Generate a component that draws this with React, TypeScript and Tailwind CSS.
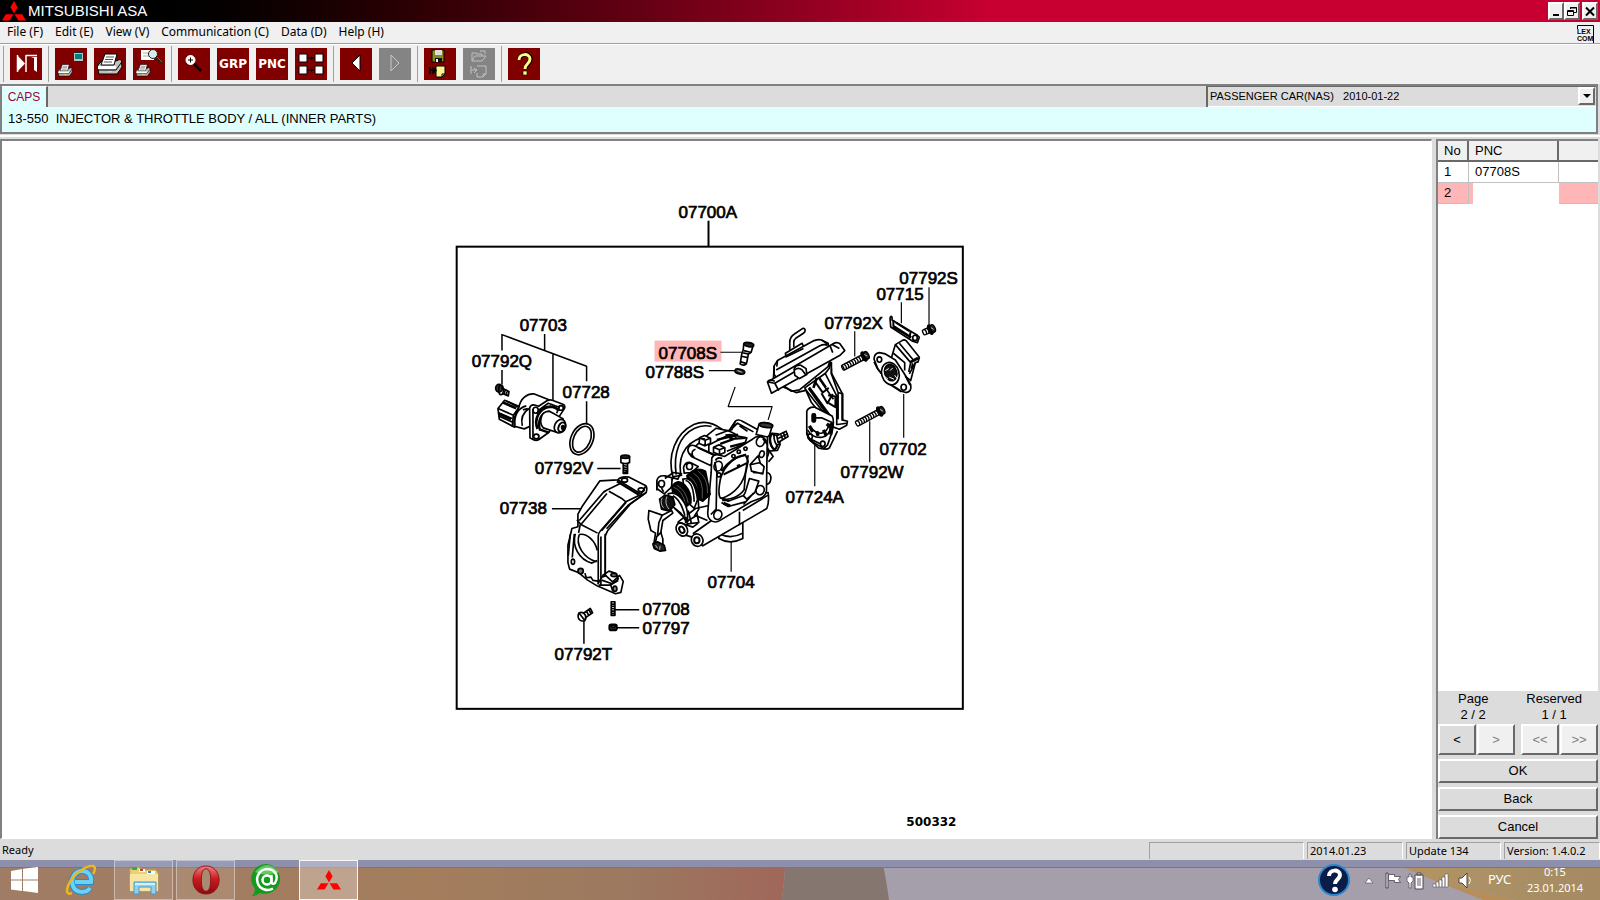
import React from "react";

const raised =
  "border-2 border-t-white border-l-white border-r-[#696969] border-b-[#696969]";
const pixelFont = "font-['Liberation_Sans',Arial,sans-serif]";

const menus = ["File (F)", "Edit (E)", "View (V)", "Communication (C)", "Data (D)", "Help (H)"];

function Diamonds({ className }: { className: string }) {
  return (
    <svg viewBox="0 0 24 20" className={className} fill="#ff0000" aria-hidden="true">
      <path d="M12 0l3.6 6.2L12 12.4 8.4 6.2z" />
      <path d="M11.4 13.2L7.6 19.6H0l3.8-6.4z" />
      <path d="M12.6 13.2l3.8 6.4H24l-3.8-6.4z" />
    </svg>
  );
}

function Printer() {
  return (
    <g strokeLinejoin="round">
      <path d="M4 17l4-4h14l5-2 1 8-5 7H5l-1-4z" fill="#c0c0c0" stroke="#000" />
      <path d="M11 6h12l-3 11H7z" fill="#fff" stroke="#000" />
      <path d="M12 9h8M11 11.500h8M10 14h8" stroke="#555" />
      <path d="M4 18h18v3H4z" fill="#fff" />
      <path d="M4 22h18l5-7" fill="none" stroke="#000" />
      <path d="M14 23h4v1h-4z" fill="#ffee00" />
    </g>
  );
}

type Tool = { label: string; icon: React.ReactNode; disabled?: boolean };

const toolGroups: Tool[][] = [
  [
    {
      label: "Exit",
      icon: (
        <g>
          <path d="M8 8v15l7-7.500z" fill="#fff" />
          <path d="M16 7v17M7.500 7v17" stroke="#fff" strokeWidth="1.500" />
          <path d="M16 7.500h11" stroke="#fff" strokeWidth="1.500" />
          <path d="M21 9h6v15l-3-2V10z" fill="#fff" />
        </g>
      ),
    },
  ],
  [
    {
      label: "Print screen",
      icon: (
        <g>
          <path d="M18.500 4.500h10v9h-10z" fill="#c0c0c0" stroke="#222" />
          <path d="M20 6h7v5h-7z" fill="#008080" />
          <g transform="translate(1 13) scale(.58)">
            <Printer />
          </g>
        </g>
      ),
    },
    { label: "Print", icon: <Printer /> },
    {
      label: "Print preview",
      icon: (
        <g>
          <path d="M8 2h13v10H8z" fill="#fff" />
          <path d="M10 5h7M10 8h7" stroke="#aaa" />
          <circle cx="20" cy="6" r="4.500" fill="#d8ecec" stroke="#222" />
          <path d="M23 9l6 6" stroke="#222" strokeWidth="2.500" />
          <path d="M24 9l5 5" stroke="#a06030" />
          <g transform="translate(1 13) scale(.58)">
            <Printer />
          </g>
        </g>
      ),
    },
  ],
  [
    {
      label: "Zoom",
      icon: (
        <g>
          <circle cx="12.500" cy="12" r="4.500" fill="#fff" stroke="#fff" />
          <path d="M10 12h5M12.500 9.500v5" stroke="#000" />
          <path d="M16 16l7 7" stroke="#000" strokeWidth="2.500" />
        </g>
      ),
    },
    { label: "GRP", icon: null },
    { label: "PNC", icon: null },
    {
      label: "Links",
      icon: (
        <g>
          <path
            d="M4 6h8v8H4zM20 6h8v8h-8zM4 18h8v8H4zM20 18h8v8h-8z"
            fill="#fff"
            stroke="#000"
          />
          <path d="M13 10h4M13 22h4" stroke="#000" />
          <path d="M16 8l3 2-3 2zM16 20l3 2-3 2z" fill="#000" />
        </g>
      ),
    },
  ],
  [
    { label: "Previous", icon: <path d="M20 7v16l-8-8z" fill="#fff" stroke="#000" /> },
    {
      label: "Next",
      icon: <path d="M12 7v16l8-8z" fill="none" stroke="#c8c8c8" />,
      disabled: true,
    },
  ],
  [
    {
      label: "Save list",
      icon: (
        <g>
          <path d="M8 2h12v12H8z" fill="#8a8a20" stroke="#000" />
          <path d="M11 2h7v5h-7z" fill="#ddd" />
          <path d="M11 10h7v4h-7z" fill="#111" />
          <path d="M12 11h2v3h-2z" fill="#eee" />
          <path d="M12 18h9v8l-3 3h-6z" fill="#fff58a" stroke="#000" />
          <path d="M21 26h-3v3" fill="none" stroke="#000" />
          <path d="M6 19v7M6 22h6M9 20l3 2.500-3 2.500z" stroke="#000" strokeWidth="1.500" />
        </g>
      ),
    },
    {
      label: "Open list",
      icon: (
        <g fill="none" stroke="#c0c0c0">
          <path d="M9 13V5h4l1 1h5v2M9 13l3-5h11l-4 5zM17 3h5v3" />
          <path d="M14 18h9v8l-3 3h-6v-4M20 29v-3h3M8 18v8M8 22h6M11 20l3 2-3 3" />
        </g>
      ),
      disabled: true,
    },
  ],
  [
    {
      label: "Help",
      icon: (
        <g fill="none">
          <path
            d="M11.500 12c0-7 11-7 11-1 0 5-5 4.500-5 10"
            stroke="#000"
            strokeWidth="4.500"
          />
          <path
            d="M11 12c0-7 11-7 11-1 0 5-5 4.500-5 10"
            stroke="#ffff80"
            strokeWidth="3"
          />
          <path d="M15 23h4v4h-4z" fill="#ffff80" stroke="#000" strokeWidth=".6" />
        </g>
      ),
    },
  ],
];

function ToolButton({ label, icon, disabled }: Tool) {
  return (
    <button
      aria-label={label}
      disabled={disabled}
      className={`h-8 w-8 shrink-0 ${disabled ? "bg-[#848484]" : "bg-[#800000]"}`}
    >
      {icon ? (
        <svg viewBox="0 0 32 32" className="h-8 w-8">
          {icon}
        </svg>
      ) : (
        <span className="flex justify-center font-['DejaVu_Sans',sans-serif] text-[12px] font-bold text-white">
          {label}
        </span>
      )}
    </button>
  );
}

const labels: [string, number, number][] = [
  ["07700A", 679, 217],
  ["07792S", 900, 283],
  ["07715", 877, 299],
  ["07792X", 825, 328],
  ["07702", 880, 454],
  ["07792W", 841, 478],
  ["07724A", 786, 503],
  ["07703", 520, 330],
  ["07792Q", 472, 366],
  ["07728", 563, 397],
  ["07792V", 535, 474],
  ["07738", 500, 514],
  ["07708", 643, 615],
  ["07797", 643, 634],
  ["07792T", 555, 660],
  ["07708S", 659, 358],
  ["07788S", 646, 377],
  ["07704", 708, 588],
];

function Bolt({ x, y, angle, length }: { x: number; y: number; angle: number; length: number }) {
  const threads = [];
  for (let i = 8; i < length; i += 8) threads.push(`M${-i} -8q5 8 0 16`);
  return (
    <g transform={`translate(${x} ${y}) rotate(${angle})`} strokeWidth="4">
      <rect x={-length} y="-8" width={length} height="16" rx="4" fill="#fff" />
      <path d={threads.join("")} />
      <ellipse cx="0" cy="0" rx="6" ry="15" fill="#000" />
      <ellipse cx="8" cy="0" rx="7" ry="12" fill="#222" />
      <path d="M4 -5l5 8" stroke="#fff" strokeWidth="2" />
    </g>
  );
}

function IdleMotor() {
  return (
    <g transform="translate(450 300) scale(.33333)">
      <path d="M157 150V102L411 197V242M285 100V150M310 162V306M157 208V252M411 302V370M443 504H513" />
      <g strokeWidth="5">
        <ellipse cx="148" cy="263" rx="10" ry="12" fill="#333" />
        <ellipse cx="154" cy="268" rx="7" ry="14" />
        <path d="M160 264l18 9-2 13-18-7M167 267l-4 14M173 270l-4 14" />
        <path d="M145 324l20-25 44 19-2 20-12 42-46-24z" fill="#fff" />
        <path d="M145 324l46 20 18-25M145 336l42 18M147 346l40 18M170 301l38 20M191 344l-3 34" />
        <path d="M160 306l40 17M148 340l36 16" strokeWidth="8" />
        <path d="M208 320c4-26 24-42 46-40l42 17-10 60-62 28-30-8c-3-18 1-36 14-57z" fill="#fff" />
        <path d="M196 376c-4-28 8-54 34-60M218 376c-5-22 2-40 20-52M220 328l14-4" />
        <path
          d="M240 322q4-12 17-8l10 3 26-17q8-4 15-1l32 12q9 5 4 14l-10 15-36 55-30 22q-8 5-18 0l-9-5z"
          fill="#fff"
        />
        <path d="M250 325v90M268 328l28-20 33 12-8 18M262 340c4-14 18-20 34-20" />
        <ellipse cx="258" cy="329" rx="8" ry="9" />
        <ellipse cx="334" cy="322" rx="7" ry="7" />
        <ellipse cx="260" cy="408" rx="8" ry="7" />
        <path d="M264 385c-12-28 4-64 38-67 10 0 22 6 24 12" strokeWidth="8" />
        <path d="M272 390c-10-24 0-54 28-58M268 386l30 10" strokeWidth="7" />
        <path d="M275 350c4-14 14-18 26-17l40 22-18 41-42-14c-8-8-9-20-6-32z" fill="#fff" />
        <ellipse cx="331" cy="377" rx="16" ry="21" transform="rotate(24 331 377)" fill="#fff" />
        <ellipse cx="337" cy="380" rx="10" ry="15" transform="rotate(24 337 380)" strokeWidth="6" />
        <ellipse cx="340" cy="381" rx="4" ry="6" fill="#000" />
        <ellipse cx="397" cy="416" rx="33" ry="49" transform="rotate(24 397 416)" />
        <ellipse cx="397" cy="416" rx="25" ry="41" transform="rotate(24 397 416)" />
        <path d="M514 468h26v18q-13 7-26 0z" fill="#fff" />
        <ellipse cx="527" cy="469" rx="13" ry="5" fill="#222" />
        <path d="M521 489v30h13v-30M521 495l13 3M521 502l13 3M521 509l13 3M521 516h13" />
      </g>
    </g>
  );
}

function Bracket() {
  return (
    <g transform="translate(480 450) scale(.33333)">
      <path d="M217 175H311M405 478H479M411 532H479M313 512V580" />
      <g strokeWidth="5">
        <path
          d="M415 88q10-12 34-8l50 26q5 5 1 20l-48 35-68 80-7 15v118l22 20 21-19 11 18-7 33-16 4-54-23-30-18-26-22-28-11-5-20 0-52 12-50 18-5 0-38 12-22 54-78z"
          fill="#fff"
        />
        <path d="M415 88l68 42M372 124l50-25M299 210l72-84 12-8M302 222l-5 25M292 208l12 14 78-93" />
        <path d="M412 92l66 41" strokeWidth="7" />
        <path d="M484 132l-45 22-78 89q-5 5-5 14v145M497 128l-52 37-64 70M484 132l14-24" />
        <path d="M388 122l40 23 12 10M304 222l50 26M440 155l-74 86" />
        <path d="M364 258v148M377 250v128M355 400l12-20 14-5" />
        <path d="M287 250c-10 36 10 78 50 88l16-8" />
        <path d="M299 252c23-5 49 20 54 48M299 252c-12 32 14 72 52 82" />
        <path d="M272 252l-6 64M284 251l-6 70" />
        <ellipse cx="280" cy="334" rx="5" ry="8" />
        <ellipse cx="303" cy="362" rx="8" ry="8" fill="#777" />
        <path d="M316 368l4 14 14-2 6 10 16 2M368 376l20-14 22 7 6 17-18 14-32-11" />
        <ellipse cx="403" cy="374" rx="9" ry="5" fill="#777" />
        <path d="M392 399l8 24M416 390l-24 14-34 0" />
        <ellipse cx="406" cy="415" rx="6" ry="8" fill="#888" />
        <ellipse cx="435" cy="89" rx="9" ry="6" />
        <ellipse cx="485" cy="118" rx="9" ry="6" />
        <path d="M395 454h11v41h-11zM395 461h11M395 468h11M395 475h11M395 482h11M395 489h11" />
        <rect x="389" y="522" width="23" height="18" rx="6" fill="#222" />
        <ellipse cx="401" cy="527" rx="6" ry="3" fill="#fff" />
        <path d="M310 490l22-16 7 13-20 14M320 481l7 13M327 477l7 12" fill="#fff" />
        <path d="M298 488q10-6 18 4 6 10 0 18-14 6-20-8-2-8 2-14zM300 490l14 18" fill="#fff" />
      </g>
    </g>
  );
}

function ThrottleBody() {
  return (
    <g transform="translate(630 320) scale(.33333)">
      <path d="M273 95H337M238 150H315M317 199L296 258H428L416 298M305 664V754" strokeWidth="3.500" />
      <g strokeWidth="5">
        {/* adjusting screw and o-ring */}
        <path d="M343 70l28 5-6 20-8 5-6 29q-9 9-19 1l5-31 4-10z" fill="#fff" />
        <ellipse cx="358" cy="72" rx="15" ry="6" transform="rotate(10 358 72)" fill="#222" />
        <path d="M343 90l20 5M341 97l18 4M336 107l19 4M334 124l18 5" />
        <ellipse cx="331" cy="153" rx="15" ry="7" transform="rotate(14 331 153)" fill="#333" />
        <path d="M324 150l13 5" stroke="#fff" strokeWidth="2" />

        {/* lever plate */}
        <path
          d="M131 472c-20-68 8-134 62-160 28-12 58-6 84 14l-38 20c-62 10-94 50-86 112l-8 18z"
          fill="#fff"
        />
        <path d="M140 462c-10-66 12-118 54-138 16-8 36-10 52-6" />

        {/* lower pipes */}
        <path d="M268 628v26q34 20 72 0V582" fill="#fff" />
        <path d="M270 640q34 18 70-2" />
        <path d="M146 604l52-40 218-48q4 28-4 48l-192 112-32-26-40-12z" fill="#fff" />
        <path d="M190 640l56-40M166 606l34-20 34 14M330 574v40M340 570l76-46" />
        <ellipse cx="157" cy="627" rx="16" ry="21" transform="rotate(-30 157 627)" fill="#fff" />
        <ellipse cx="157" cy="628" rx="7" ry="10" transform="rotate(-30 157 628)" strokeWidth="6" />
        <ellipse cx="203" cy="659" rx="17" ry="19" transform="rotate(-30 203 659)" fill="#fff" />
        <ellipse cx="202" cy="659" rx="8" ry="9" strokeWidth="6" />

        {/* upper casting */}
        <path
          d="M232 345l28-22 38 8 20-30q10-6 22 2l44 24 14-10 34 38-20 60-164 2-56-34z"
          fill="#fff"
        />
        <path d="M300 332l24-24 48 26M318 302l-12 28M330 316l24 16M258 344l38-14 24 12M236 374l64-32 52 10-6 18-54 22" />
        <path d="M262 358l64-16M272 370l50-18M302 378l48-12M288 344l32 2M300 356l48-4M290 350l20 0" strokeWidth="7" />
        <path d="M210 352l15-7 18 8v15l-16 8-18-7zM210 352l17 7 15-6M227 359v16" fill="#fff" />
        <path d="M252 380l16-7 18 9v14l-16 7-18-8zM252 380l18 8 16-7M270 388v14M238 372v28" fill="#fff" />
        <path d="M178 398c-8-14 2-27 15-23l68 30-18 30-56-26z" fill="#fff" />
        <path d="M190 406c-6-10 0-18 8-20M178 398l16 12M205 382l58 27" />

        {/* idle nozzle and spring end */}
        <path d="M380 342l9-32q20-9 40 4l-11 36z" fill="#fff" />
        <ellipse cx="410" cy="314" rx="20" ry="7" transform="rotate(8 410 314)" fill="#333" />
        <path d="M414 392l30-2 8-18-6-32-18-2-14 12z" fill="#fff" />
        <ellipse cx="432" cy="363" rx="10" ry="23" transform="rotate(-12 432 363)" strokeWidth="7" />
        <ellipse cx="442" cy="358" rx="7" ry="15" transform="rotate(-16 442 358)" fill="#fff" />
        <path d="M442 346l28-14 6 16-30 18z" fill="#fff" />
        <path d="M454 342l6 16M462 337l6 16M446 354l28-14" />
        <path d="M425 344q-8 22 8 44M415 384l16 24-14 16M413 456q13 4 11 20-2 14-12 16" />

        {/* flange */}
        <path
          d="M247 412q6-14 24-8l14 4 84-52q16-14 30-6 16 8 14 30l-2 132q-4 18-20 22l-26 10-92 55q-18 12-32-2-8-7-6-24l10-118z"
          fill="#fff"
        />
        <path d="M256 424l6 34-2 108-16 16M400 354l12 16M258 420q6-12 20-6" />
        <ellipse cx="266" cy="437" rx="12" ry="15" transform="rotate(18 266 437)" />
        <ellipse cx="393" cy="363" rx="12" ry="15" transform="rotate(18 393 363)" />
        <ellipse cx="397" cy="401" rx="7" ry="10" transform="rotate(18 397 401)" />
        <ellipse cx="392" cy="509" rx="12" ry="14" transform="rotate(18 392 509)" />
        <ellipse cx="265" cy="583" rx="12" ry="14" transform="rotate(18 265 583)" />
        <circle cx="268" cy="463" r="6" />
        <circle cx="312" cy="407" r="5" />
        <circle cx="328" cy="394" r="5" />
        <circle cx="348" cy="385" r="5" />

        {/* bore */}
        <path d="M270 492c4-46 38-82 78-88l8 18-8 38-4 48c-14 20-46 36-72 24-6-10-4-26-2-40z" fill="#fff" />
        <path d="M276 452c16-24 42-44 74-50M282 462l70-34M322 436l10-3" strokeWidth="6" />
        <path d="M356 404l-6 42c-6 40-32 74-74 88M272 532l24 10 48-18M278 540l20-2M276 546l20 12 52-14" />
        <path d="M362 432l24-26 6 20-26 6zM362 432l4 20 34 8 4-22-14-12M370 456l28 2" />
        <path d="M360 474l28 8-12 34-24 20-10-10 6-12zM360 474l-12 40M372 518l-30 34" fill="#fff" />
        <path d="M282 548l20 8" strokeWidth="9" />

        {/* return springs */}
        <path d="M162 440q6-16 20-14l24 12-20 18-22 2z" fill="#fff" />
        <ellipse cx="180" cy="437" rx="9" ry="10" />
        <path d="M172 466q26-30 56-14l14 70-22 20-34-16z" fill="#000" />
        <path d="M180 468q30 18 22 66M192 458q32 18 26 76M206 452q30 20 28 66" stroke="#fff" strokeWidth="1" />
        <path d="M160 476q36-10 44 62l-10 26-26-24z" fill="#fff" />
        <path d="M168 480q24 4 26 64M178 476q28 12 28 62M206 538l2 28-14 22" />
        <path d="M82 480q4-16 24-14l22 6-2 28-22 20-22-16z" fill="#fff" />
        <ellipse cx="96" cy="490" rx="9" ry="10" />
        <path d="M82 484v26M96 502l6 12M106 474l26-18 26 4M126 480l8-12 24-4" />
        <path d="M126 498q20-26 40-4 22 24 18 54l-16 12-36-36z" fill="#000" />
        <path d="M132 500q28 10 36 52M142 494q28 16 34 54" stroke="#fff" strokeWidth="1" />
        <path d="M116 520q26-10 48 26 12 20 10 50l-20-14-30-30z" fill="#fff" />
        <path d="M130 526q24 12 36 60M134 562l20 16 20 32 34-4-6-28M176 570l10 40M150 606l40 14 16-12" />
        <path d="M166 590l10 14" strokeWidth="8" />
        <path d="M90 536l16-12 24 6 6 22-16 20-24-6z" fill="#111" />
        <path d="M98 532q-8 16 4 30M112 528q-8 20 6 38" stroke="#fff" strokeWidth="2" />

        {/* bracket with damper */}
        <path d="M58 570l40 14 28-14 4 8-30 22-6 36 6 20v26l-20 4-8-10 6-38-14-8-8-34z" fill="#fff" />
        <path d="M98 584l-10 22-4 40 12-12M82 646l-6 28" />
        <path d="M70 670l14-6 20 10 4 16-16 2-18-8z" fill="#222" />
        <path d="M78 674l6 10M92 676l-2 12" stroke="#fff" strokeWidth="2" />
      </g>
    </g>
  );
}

function Actuators() {
  return (
    <g transform="translate(750 260) scale(.33333)">
      <path d="M539 80V193M456 125V188M316 212V288M463 400V532M361 482V605M196 535V677" strokeWidth="3.500" />
      <g strokeWidth="5">
        {/* vacuum motor */}
        <path d="M121 268v-22q0-18 14-26l24-16q8-3 8 6 0 5-5 8l-22 14q-7 5-7 14v14" fill="#fff" />
        <path d="M108 278l50-30 6 14-6 16-48 14z" fill="#fff" />
        <path d="M74 316l10-16 110-60q14-5 22-2l20 10 8 46-8 24-86 70-24 4-54-38z" fill="#fff" />
        <path d="M80 328l130-72q14-7 24-2M74 316v26l12 16M108 290l54-26M98 378l42 18 26-6 28-24M84 300l-2 18M216 238l20 14" />
        <path d="M54 364l196-114q14-8 22 0l14 20-14 14-206 114z" fill="#fff" />
        <path d="M54 364l22 4 12 22M76 368l66-38M248 252l22 12M250 276l-8-20M54 364q6-10 22-2" />
        <path d="M134 326q4-14 20-12l16 10 2 18-22 12-14-10z" fill="#fff" />
        <path d="M136 328q10-9 22 0l12 16" />
        <path
          d="M166 382l62-44 12-16 2-16 4 0v32l32 60v80l16 4-2 12-22 12-28-10-56-70z"
          fill="#fff"
        />
        <path d="M246 324v16l20 56v80M228 340l34 66v88M280 398v82M168 386l70 90M180 380l68 92M206 350l46 66M266 396l14 4M264 492l28-4" />
        <path d="M196 362l24 34 18-14M210 352l20 28M216 398l18 30 16-28M236 404l22 4v32l-20-12" strokeWidth="6" />
        <path d="M178 382l62 88M202 352l-10 30" strokeWidth="8" />
        <path d="M172 452q6-14 24-12l52 26q8 14 0 48l-14 40-12 11-14-2-28-26-8-16z" fill="#fff" />
        <path d="M174 508q16 26 44 22 24-4 26-34M182 498q16 22 34 20 18-4 22-24" />
        <path d="M196 472l22 0 30 14-6 26" strokeWidth="5" />
        <path d="M180 496l10 18M202 512l4 14M222 508l8 16M232 490l12 10M246 488l-2 34" strokeWidth="10" />
        <rect x="188" y="460" width="10" height="24" rx="4" fill="#000" />
        <ellipse cx="182" cy="528" rx="7" ry="8" />
        <ellipse cx="220" cy="550" rx="7" ry="8" />
        <path d="M172 516l10 24 38 22q10 8 20 0l24-50M176 532l36 18" />

        {/* strap */}
        <path d="M422 172q2-8 6-2v8l76 46 6 6-6 16-14-4-66-43z" fill="#fff" />
        <path d="M432 178v18l54 34M440 186l40 26M430 198l54 32M484 212l-4 22" strokeWidth="6" />
        <ellipse cx="497" cy="232" rx="7" ry="8" />
        <Bolt x={543} y={207} angle={-24} length={24} />
        <Bolt x={344} y={288} angle={-28} length={74} />
        <Bolt x={391} y={453} angle={-28} length={80} />

        {/* throttle position sensor */}
        <path d="M426 292l12-40 20-12q6-4 12 0l40 50-4 14-8 2-14 54-30-24z" fill="#fff" />
        <path d="M438 252l46 54 26-14M450 248l42 50M484 306l-6 28M498 306l-18 34M432 278l34 28v24M490 308l-4 16" />
        <path d="M484 304l22-12" strokeWidth="8" />
        <path
          d="M374 296q0-18 16-20l18 4 30 18 26 40 20 34q4 22-14 24l-14-4-34-22-36-44z"
          fill="#fff"
        />
        <path d="M374 304l10 20 38 48 34 22M468 346l14 28" />
        <ellipse cx="390" cy="297" rx="7" ry="8" />
        <ellipse cx="463" cy="380" rx="8" ry="9" />
        <ellipse cx="423" cy="339" rx="26" ry="34" transform="rotate(-16 423 339)" fill="#fff" />
        <ellipse cx="424" cy="336" rx="18" ry="25" transform="rotate(-16 424 336)" fill="#111" />
        <path d="M408 330l10-6M420 350l14 6M430 322l-8 8M404 346l12 10M436 344l6 8" stroke="#fff" strokeWidth="3" />
      </g>
    </g>
  );
}

function PartsDiagram() {
  return (
    <svg
      viewBox="2 141 1430 696"
      className="absolute inset-0 h-full w-full"
      fill="none"
      stroke="#000"
      role="img"
      aria-label="Injector and throttle body"
    >
      <rect x="457" y="246" width="506.500" height="462.500" strokeWidth="2" />
      <path d="M709 220V246" strokeWidth="2" />
      <rect x="655" y="340" width="67" height="21" fill="#ffb6b6" stroke="none" />
      <g strokeWidth="4.500" strokeLinejoin="round">
        <IdleMotor />
        <Bracket />
        <ThrottleBody />
        <Actuators />
      </g>
      <g fill="#000" strokeWidth=".7" fontSize="17" fontFamily="'Liberation Sans', Arial, sans-serif">
        {labels.map(([text, x, y]) => (
          <text key={text} x={x} y={y}>
            {text}
          </text>
        ))}
      </g>
      <text
        x="907"
        y="826"
        fill="#000"
        stroke="none"
        fontSize="12"
        fontWeight="700"
        fontFamily="'DejaVu Sans', sans-serif"
      >
        500332
      </text>
    </svg>
  );
}

function TitleBar() {
  const button = `flex h-[18px] w-4 items-center justify-center bg-[#f0f0f0] ${raised}`;
  return (
    <header className="flex h-[22px] items-center bg-linear-to-r from-black from-6% to-[#c80031] to-62% pr-[2px] pl-[2px]">
      <Diamonds className="h-5 w-6" />
      <h1 className="flex-1 pl-[2px] font-['Liberation_Sans',Arial,sans-serif] text-[15px] leading-[22px] text-white">
        MITSUBISHI ASA
      </h1>
      <button aria-label="Minimize" className={button}>
        <svg viewBox="0 0 12 14" className="h-[14px] w-3 shrink-0">
          <path d="M3 10h6v2H3z" />
        </svg>
      </button>
      <button aria-label="Restore" className={button}>
        <svg viewBox="0 0 12 14" className="h-[14px] w-3 shrink-0" fill="none" stroke="#000">
          <path d="M4.500 5V3.500h6v5H8M1.500 6.500h6v5h-6zM4 4h7M1 7.500h7" />
        </svg>
      </button>
      <button aria-label="Close" className={`ml-[2px] ${button}`}>
        <svg viewBox="0 0 12 14" className="h-[14px] w-3 shrink-0" stroke="#000" strokeWidth="2">
          <path d="M2 3.500l8 8M10 3.500l-8 8" />
        </svg>
      </button>
    </header>
  );
}

function SidePanel() {
  const nav = `flex h-[31px] items-center justify-center ${raised}`;
  const head = "border-r-2 border-b-2 border-[#696969] bg-[#f0f0f0] pl-[6px] text-left font-normal";
  return (
    <aside className="flex w-[162px] shrink-0 flex-col border-t-2 border-l-2 border-[#808080] bg-white text-[13px]">
      <table className="w-full table-fixed border-separate border-spacing-0 leading-[18px]">
        <thead>
          <tr className="h-[21px]">
            <th className={`w-[31px] ${head}`}>No</th>
            <th className={`w-[90px] ${head}`}>PNC</th>
            <th aria-label="Notes" className="border-b-2 border-[#696969] bg-[#f0f0f0]" />
          </tr>
        </thead>
        <tbody>
          <tr className="h-[21px]">
            <td className="border-r border-b border-[#c0c0c0] pl-[6px]">1</td>
            <td className="border-r border-b border-[#c0c0c0] pl-[6px]">07708S</td>
            <td className="border-b border-[#c0c0c0]" />
          </tr>
          <tr className="h-[21px] bg-[#ffb6b6]">
            <td className="border-r border-b border-[#c0c0c0] pl-[6px]">2</td>
            <td className="pl-1">
              <input aria-label="PNC 2" className="block h-[21px] w-full bg-white outline-none" />
            </td>
            <td className="border-b border-[#c0c0c0]" />
          </tr>
        </tbody>
      </table>
      <div className="mt-auto bg-[#dcdcdc]">
        <div className="flex justify-between pr-4 pb-px pl-5 text-center leading-4">
          <p>
            Page
            <br />2 / 2
          </p>
          <p>
            Reserved
            <br />1 / 1
          </p>
        </div>
        <div className="flex gap-[6px] text-[#808080]">
          <div className="grid flex-1 grid-cols-2 gap-px">
            <button className={`text-black ${nav}`}>&lt;</button>
            <button disabled className={`bg-[#f0f0f0] ${nav}`}>&gt;</button>
          </div>
          <div className="grid flex-1 grid-cols-2 gap-px">
            <button disabled className={`bg-[#f0f0f0] ${nav}`}>&lt;&lt;</button>
            <button disabled className={`bg-[#f0f0f0] ${nav}`}>&gt;&gt;</button>
          </div>
        </div>
        <div className="mt-1 flex flex-col gap-1">
          {["OK", "Back", "Cancel"].map((name) => (
            <button key={name} className={`h-6 leading-5 ${raised}`}>
              {name}
            </button>
          ))}
        </div>
      </div>
    </aside>
  );
}

function StatusBar() {
  const field = "h-[17px] truncate border-t border-l border-r border-t-[#a0a0a0] border-l-[#a0a0a0] border-r-white pl-[2px] leading-4";
  return (
    <footer className="flex h-5 items-center gap-[3px] bg-[#dcdcdc] pt-px pl-[2px] font-['Noto_Sans',sans-serif] text-[11px]">
      <span className="flex-1">Ready</span>
      <span className={`w-[155px] ${field}`} />
      <span className={`w-24 ${field}`}>2014.01.23</span>
      <span className={`w-[95px] ${field}`}>Update 134</span>
      <span className={`w-24 ${field}`}>Version: 1.4.0.2</span>
    </footer>
  );
}

function Taskbar() {
  const open = "flex h-10 w-[59px] items-center justify-center border border-white/40 bg-white/10";
  return (
    <nav className="relative flex h-10 items-center font-['Noto_Sans',sans-serif] text-white">
      <svg
        viewBox="0 0 1600 40"
        preserveAspectRatio="none"
        className="absolute inset-0 h-full w-full"
        aria-hidden="true"
      >
        <defs>
          <linearGradient id="warm">
            <stop offset="0" stopColor="#a07c66" />
            <stop offset=".55" stopColor="#a37d5c" />
            <stop offset=".8" stopColor="#9c7960" />
            <stop offset="1" stopColor="#a0665a" />
          </linearGradient>
          <linearGradient id="gold">
            <stop offset="0" stopColor="#b8935c" />
            <stop offset=".4" stopColor="#ac9266" />
            <stop offset="1" stopColor="#a58a62" />
          </linearGradient>
        </defs>
        <path d="M0 0h1600v40H0z" fill="#a59fac" />
        <path d="M0 0h786l-4 40H0z" fill="url(#warm)" />
        <path d="M786 0h96q4 18 7 40H782z" fill="#85766f" />
        <path d="M1385 0q60 26 130 40h85V0z" fill="url(#gold)" />
        <path d="M1385 0q60 26 130 40h-32q-50-20-98-40z" fill="#b78e58" />
        <path d="M0 0h1600v8H0z" fill="#8e8fab" />
        <path d="M0 7h1600v1H0z" fill="#77748f" />
      </svg>
      <div className="relative flex flex-1 items-center">
        <button aria-label="Start" className="ml-[11px]">
          <svg viewBox="0 0 27 26" className="h-[26px] w-[27px]" fill="#fff">
            <path d="M0 4l11-2v10.500H0zM12 1.800L27 0v12.500H12zM0 13.500h11V24L0 22.400zM12 13.500h15V26l-15-2z" />
          </svg>
        </button>
        <button aria-label="Internet Explorer" className="mr-[17px] ml-[27px]">
          <svg viewBox="0 0 32 32" className="h-8 w-8" fill="none">
            <path
              d="M25 24c-3 5-14 6-17-2-3-9 3-15 9-15 7 0 10 6 9 11H10"
              stroke="#1f8fd0"
              strokeWidth="6"
            />
            <path
              d="M25 24c-3 5-14 6-17-2-3-9 3-15 9-15 7 0 10 6 9 11H10"
              stroke="#6fd0f5"
              strokeWidth="4"
            />
            <path
              d="M7 29c-5 2-6-1-4-7C7 11 21 1 28 2c3 1 2 5 0 8"
              stroke="#e8b820"
              strokeWidth="2.500"
            />
          </svg>
        </button>
        <button aria-label="File Explorer" className={open}>
          <svg viewBox="0 0 32 32" className="h-8 w-8">
            <path d="M2 5l9-2 2 3h15l2 3v18H2z" fill="#e8cf78" stroke="#c5a64a" />
            <path d="M4 3h5v3H4z" fill="#3aa845" />
            <path d="M11 5h6v3h-6z" fill="#fff" />
            <path d="M12 5h3v2h-3z" fill="#c84030" />
            <path d="M19 7h8v3h-8z" fill="#fff" />
            <path d="M20 7h3v2h-3z" fill="#2e80d0" />
            <path d="M2 10h28v17H2z" fill="#f7e6a2" />
            <path d="M6 30V18h22v12h-5v-7H11v7z" fill="#8fd0ee" stroke="#4c98c4" />
            <path d="M7 19h20v2H7z" fill="#d5f0fb" />
          </svg>
        </button>
        <button aria-label="Opera" className={`ml-[3px] ${open}`}>
          <svg viewBox="0 0 30 32" className="h-[30px] w-7">
            <defs>
              <linearGradient id="opera" x2="0" y2="1">
                <stop offset="0" stopColor="#f08080" />
                <stop offset=".45" stopColor="#cc1c22" />
                <stop offset="1" stopColor="#8c0810" />
              </linearGradient>
            </defs>
            <path
              fillRule="evenodd"
              fill="url(#opera)"
              stroke="#901018"
              d="M15 1C6 1 1 8 1 16s5 15 14 15 14-7 14-15S24 1 15 1zm0 3c4 0 5 6 5 12s-1 12-5 12-5-6-5-12 1-12 5-12z"
            />
          </svg>
        </button>
        <button aria-label="Mail Agent" className="mx-4">
          <svg viewBox="0 0 32 34" className="h-[34px] w-8">
            <path d="M16 1a15 15 0 1 1-7 29q-4 3-8 3 3-3 3-7A15 15 0 0 1 16 1z" fill="#159a20" />
            <path d="M4 9q12-14 24 0-12 6-24 0z" fill="#63c95c" />
            <g fill="none" stroke="#fff" strokeWidth="2.500">
              <circle cx="16" cy="17" r="4.500" />
              <path d="M20.500 12v7q1 3 3.500 1c5-9-2-14-8-14a10.500 10.500 0 1 0 6 19.500" />
            </g>
          </svg>
        </button>
        <button
          aria-label="MITSUBISHI ASA"
          className="flex h-10 w-[59px] items-center justify-center border border-white/90 bg-white/30"
        >
          <Diamonds className="h-5 w-6" />
        </button>
      </div>
      <div className="relative flex items-center">
        <button aria-label="Help" className="mr-[14px]">
          <svg viewBox="0 0 32 32" className="h-8 w-8">
            <circle cx="16" cy="16" r="15" fill="#0a1c48" stroke="#2a86cc" strokeWidth="2" />
            <path
              d="M11 12c0-7 11-7 11-1 0 4-5 4.500-5 9"
              fill="none"
              stroke="#fff"
              strokeWidth="4"
            />
            <circle cx="17" cy="25.500" r="2.800" fill="#fff" />
          </svg>
        </button>
        <svg viewBox="0 0 112 20" className="h-5 w-28" stroke="#4a4550" fill="#fff" aria-hidden="true">
          <path d="M1 13l4-5 4 5z" strokeWidth=".6" />
          <path d="M22 3h2v15h-2z" />
          <path d="M24.500 4.500h6v2h6l-2 3 2 3h-6v-2h-6z" strokeWidth=".8" />
          <path d="M51 5h8v14h-8zM53 3h4v2h-4z" />
          <path d="M53 8h4v8h-4z" fill="#b5adb8" stroke="none" />
          <path d="M45 4v3h-2v4l2 2v5h2v-5l2-2V7h-2V4z" strokeWidth=".7" />
          <path d="M69 14h3v3h-3zM72 12h3v5h-3zM75 10h3v7h-3zM78 7h3v10h-3zM81 4h3v13h-3z" strokeWidth=".5" />
          <path d="M95 8h3l5-5v15l-5-5h-3z" />
          <path d="M105 7q3 3 0 7" fill="none" stroke="#fff" />
        </svg>
        <span className="ml-3 w-7 text-[13px]">РУС</span>
        <time className="mr-[6px] w-[78px] text-center text-[11px] leading-4">
          0:15
          <br />
          23.01.2014
        </time>
      </div>
    </nav>
  );
}

export default function App() {
  return (
    <div className={`flex h-screen flex-col overflow-hidden bg-[#dcdcdc] text-black ${pixelFont}`}>
      <TitleBar />
      <nav className="flex h-[22px] items-center gap-3 border-b border-[#a0a0a0] bg-[#f0f0f0] pr-[6px] pl-[7px] font-['Noto_Sans',sans-serif] text-[12px] leading-5">
        {menus.map((name) => (
          <button key={name} className="pb-[2px]">
            {name}
          </button>
        ))}
        <svg viewBox="0 0 17 18" className="ml-auto h-[18px] w-[17px] self-end" aria-label="LEX COM">
          <path d="M.500 4V.500h16V18" fill="none" stroke="#000" />
          <g fontSize="7" fontWeight="700" fontFamily="'Liberation Sans', sans-serif">
            <text x="0" y="9">LEX</text>
            <text x="0" y="16">COM</text>
          </g>
        </svg>
      </nav>
      <div className="flex h-10 items-start border-t border-white bg-[#f0f0f0] pt-px pl-[3px]">
        {toolGroups.map((group) => (
          <div
            key={group[0].label}
            className="mr-[6px] flex h-9 items-center gap-[7px] border-l border-[#a0a0a0] pl-[6px]"
          >
            {group.map((tool) => (
              <ToolButton key={tool.label} {...tool} />
            ))}
          </div>
        ))}
      </div>
      <section className="mr-[2px] flex flex-col border-2 border-[#808080]">
        <div className="flex h-[21px] items-end justify-between">
          <a
            href="#caps"
            className="flex h-[21px] w-[46px] items-center justify-center border-t border-r-2 border-t-white border-r-[#696969] bg-[#dfffff] text-[12px] text-[#a00040]"
          >
            CAPS
          </a>
          <div className="relative w-[390px] border-t border-l-2 border-[#696969]">
            <select
              aria-label="Catalogue"
              className="block h-5 w-full appearance-none border-b border-white bg-[#dcdcdc] pl-[2px] text-[11px]"
            >
              <option>{"PASSENGER CAR(NAS)\u00a0\u00a0 2010-01-22"}</option>
            </select>
            <span
              className={`pointer-events-none absolute top-0 right-px flex h-[18px] w-[17px] items-center justify-center bg-[#f0f0f0] ${raised}`}
            >
              <svg viewBox="0 0 8 4" className="h-1 w-2">
                <path d="M0 0h8L4 4z" />
              </svg>
            </span>
          </div>
        </div>
        <h2 className="h-[25px] bg-[#dfffff] pl-[6px] text-[13px] leading-6 whitespace-pre">
          {"13-550  INJECTOR & THROTTLE BODY / ALL (INNER PARTS)"}
        </h2>
      </section>
      <div className="mt-px flex flex-1 gap-1 border-t-2 border-white pt-[2px] pr-[2px] pb-px">
        <main className="relative flex-1 border-t-2 border-l-2 border-r border-b border-[#808080] border-r-white border-b-white bg-white">
          <PartsDiagram />
        </main>
        <SidePanel />
      </div>
      <StatusBar />
      <Taskbar />
    </div>
  );
}
